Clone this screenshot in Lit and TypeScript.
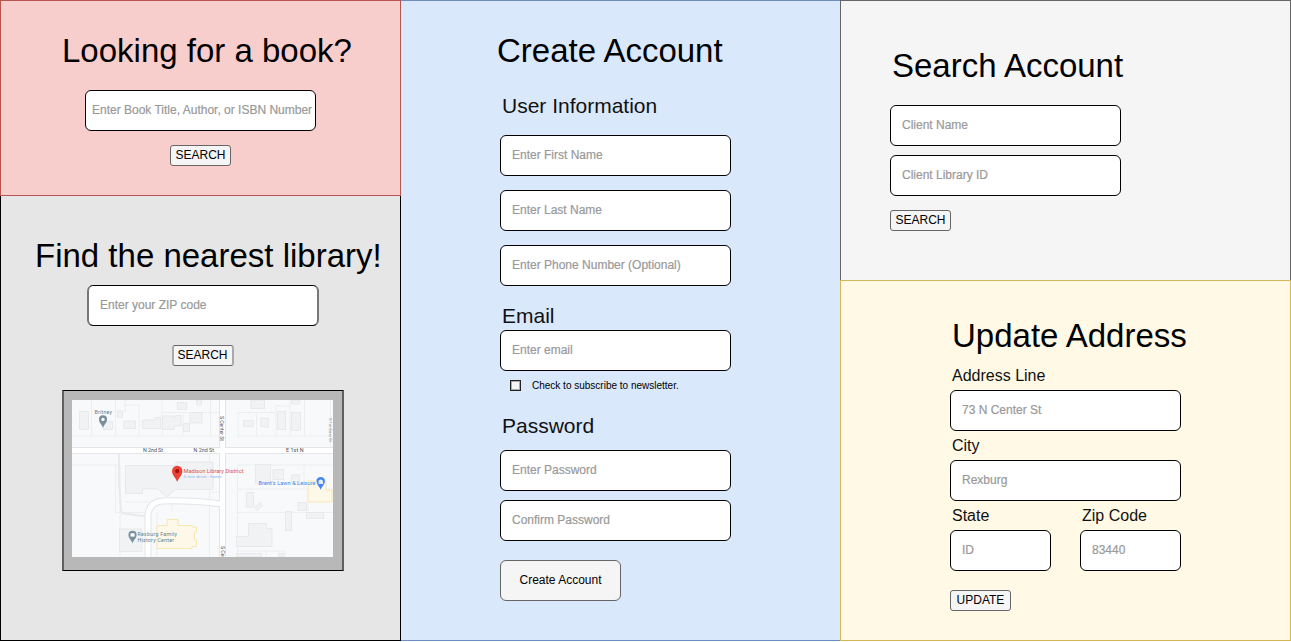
import { LitElement, html, css, svg } from "lit";
import { customElement, property } from "lit/decorators.js";

@customElement("library-map")
class LibraryMap extends LitElement {
  static styles = css`
    :host { display: block; }
    svg { display: block; width: 261px; height: 157px; font-family: Roboto, sans-serif; }
    .line { fill: none; stroke: #eceef0; stroke-width: 1; }
    .edge { fill: none; stroke: #e3e5e8; stroke-width: 7; }
    .road { fill: none; stroke: #fff; stroke-width: 5; }
    .thin { fill: none; stroke: #e8eaec; stroke-width: 2; }
    .house { fill: #f1f2f3; stroke: #e4e6e8; stroke-width: 0.8; }
    .shop { fill: #fef8e8; stroke: #fae6b5; stroke-width: 1; }
    .street { fill: #4c5054; font-size: 5.4px; }
    .side { fill: #4c5054; font-size: 4.4px; opacity: 0.65; }
    .place { fill: #5f7f8c; font-size: 5.3px; }
    .red { fill: #d8524a; font-size: 5.6px; }
    .blue { fill: #4285e8; font-size: 5.5px; }
    .note { fill: #7fb0f2; font-size: 4.2px; }
  `;

  pin(x: number, y: number, size: number, color: string, dot: string) {
    return svg`<g transform="translate(${x} ${y}) scale(${size})">
      <path d="M0 0C-.8-3-4-5-4-8.5a4 4 0 0 1 8 0C4-5 .8-3 0 0Z" fill=${color}></path>
      <circle cx="0" cy="-8.4" r="1.6" fill=${dot}></circle></g>`;
  }

  render() {
    return html`<svg viewBox="72 400 261 157">
      <rect x="72" y="400" width="261" height="157" fill="#f8f9fb"></rect>
      <path class="line" d="M72 436H219M91.500 400V436M115.500 400V436M125 413V400M125 405H139V436M162 400V412.500H219M162 412.500V436M183 412.500V436M210.500 400V436M238 412.500H276V406H290V436M238 412.500V436M256.500 412.500V436M276 412V436M304.500 400V436M238 436H330M290 406V400M330.500 400V447M72 465H120V557M115.500 465V512.500H145M125 502H172V512M157 512V557M209.500 454V557M209 492H219M237.500 465V557M237.500 465H333M237.500 489H333M237 512.500H333M308 489V512M237 551H285V557M266 551V557M304 465V489"></path>
      <path class="house" d="M79.500 411.500H88.500V429.500H79.500ZM117.500 411H122.500V417.500H117.500ZM103.500 421.500H112.500V429.500H103.500ZM124 421H135.500V428.500H123.500ZM142.500 420H155V417.500H160.500V428.500H142.500ZM162.500 416H174V418.500L175 415.500H181V426H174V429.500H162.500ZM183 423.500H189.500V431.500H183.500ZM177.500 402.500H186.500V409.500H177.500ZM190 414L193 412.500H202V423H190ZM196.500 400H201.500V405H196.500ZM251 400H264.500V408.500H251ZM243.500 420.500H253.500V426.500H243.500ZM261 418L269 418.500L268 427.500L260.500 426ZM277.500 411.500H285.500V429.500H277.500ZM291.500 412.500H300.500V430.500H291.500ZM291.500 400H299.500V404H291.500Z"></path>
      <path class="house" d="M125.500 465.500H176V462H213V489.500H176L166.500 497L158 489H142.500V493.500H125.500ZM119.500 529H142V551.500H119.500ZM255.500 464.500H270.500V484H255.500ZM273 469.500H283.500V479.500H273ZM291.500 475H299.500V484H291.500ZM246.500 492.500H253.500V507H246.500ZM254.500 507.500L260.500 502.500L262.500 505.500L257 510.500ZM285.500 511.500H291.500V530.500H285.500ZM298 502.500H306.500V510.500H298ZM306.500 512.500H323.500V518.500H306.500ZM248.500 523.500H266.500V528.500H272V546.500H236.500V536.500H248.500ZM236.500 553.500H261.500V557H236.500ZM278.500 553.500H283.500V557H278.500Z"></path>
      <path class="shop" d="M157 525.500H167V519.500H178V525.500H192V527H196.500V532H194.500V540H196.500V546.500H192V548.500H157ZM308 481H326V490H332V502H308Z"></path>
      <path class="thin" d="M119 454V482L121 510Q121.500 513 124 513.500L147 516.500"></path>
      <path class="edge" d="M72 450.500H333M222.500 400V557M148 557V515Q149 502.500 162 501Q190 500 222 504"></path>
      <path class="road" d="M72 450.500H333M222.500 400V557M148 557V515Q149 502.500 162 501Q190 500 222 504"></path>
      <text class="street" x="143" y="452.300" textLength="20">N 2nd St</text>
      <text class="street" x="193.500" y="452.300" textLength="20.500">N 2nd St</text>
      <text class="street" x="286" y="452.300" textLength="17.500">E 1st N</text>
      <text class="street" transform="translate(220.300 416) rotate(90)" textLength="25">S Center St</text>
      <text class="street" transform="translate(221 546) rotate(90)" textLength="10.500">S Ce</text>
      <text class="side" transform="translate(329.300 418) rotate(90)" textLength="24">S 1st East St</text>
      <text class="place" x="94.500" y="413.700" textLength="17.500">Britney</text>
      ${this.pin(103, 428, 1.02, "#78909c", "#fff")}
      ${this.pin(177.2, 482, 1.3, "#ea4335", "#a50e0e")}
      <text class="red" x="183.500" y="473" textLength="60">Madison Library District</text>
      <text class="note" x="183.500" y="478" textLength="38">5 min drive - home</text>
      <text class="blue" x="258.500" y="485.300" textLength="57">Brent's Lawn &amp; Leisure</text>
      ${this.pin(320.7, 490, 1.05, "#4285f4", "#fff")}
      <path d="M318.500 480.500H323V484H318.500Z" fill="#dce9ff"></path>
      ${this.pin(132.5, 543.5, 1.02, "#78909c", "#fff")}
      <path d="M130.500 533.500H132.300V536.500H130.500ZM132.800 533.500H134.600V536.500H132.800Z" fill="#fff"></path>
      <text class="place" x="137.500" y="536.300" textLength="39.500">Rexburg Family</text>
      <text class="place" x="137.500" y="542.300" textLength="36.500">History Center</text>
    </svg>`;
  }
}

@customElement("text-field")
class TextField extends LitElement {
  @property() hint = "";
  static styles = css`
    :host { display: block; width: 231px; height: 41px; flex: none; }
    input {
      display: block; box-sizing: border-box; width: 100%; height: 100%; margin: 0;
      padding: 0 0 2px var(--field-inset, 11px);
      border: 1px solid #000; border-width: 1px var(--field-side, 1px);
      border-left-color: var(--field-side-color, #000);
      border-right-color: var(--field-side-color, #000);
      border-radius: 6px; background: #fff; outline: none;
      font: 12px "Liberation Sans", Arial, sans-serif;
    }
    input::placeholder { color: #999; opacity: 1; -webkit-text-stroke: 0.2px #999; }
  `;
  render() {
    return html`<input placeholder=${this.hint} aria-label=${this.hint} />`;
  }
}

@customElement("app-root")
class AppRoot extends LitElement {
  static styles = css`
    :host {
      display: block; width: 1291px; height: 642px; background: #fff; color: #000;
      font-family: "Liberation Sans", Arial, sans-serif;
    }
    * { box-sizing: border-box; }
    main { display: grid; grid-template-columns: 401px 439px 451px; height: 641px; }
    .column, section { display: flex; flex-direction: column; }
    section { align-items: flex-start; border: 1px solid; }
    h1, h2 { margin: 0; font-weight: 400; white-space: nowrap; }
    h1 { font-size: 33px; line-height: 42px; height: 40px; }
    h2 { font-size: 21px; line-height: 32px; height: 30px; margin-left: 2px; color: #111; }
    label { display: block; font-size: 16px; line-height: 22px; height: 20px; padding-left: 2px; color: #111; }
    button {
      flex: none; width: 61px; height: 21px; padding: 0 0 1px; border: 1px solid #666; border-radius: 3px;
      background: #f5f5f5; color: #000; font: 12px "Liberation Sans", Arial, sans-serif;
    }
    .book { height: 196px; padding: 29px 0 0 61px; background: #f8cecc; border-color: #b85450; }
    .book text-field { --field-inset: 6px; margin: 20px 0 14px 23px; }
    .book button { margin-left: 108px; }
    .nearest { flex: 1; padding: 39px 0 0 34px; background: #e6e6e6; border-color: #000; border-top: 0; }
    .nearest text-field {
      width: 232px; margin: 10px 0 19px 52px;
      --field-side: 2px; --field-side-color: #777;
    }
    .nearest button { width: 62px; margin-left: 137px; padding-right: 1px; border-width: 1px 2px; border-left-color: #aaa; border-right-color: #aaa; }
    .map {
      width: 282px; height: 181px; margin: 24px 0 0 27px; padding: 9px 8px;
      background: #b8b8b8; border: 1px solid #000; border-width: 1px 2px;
      border-left-color: #606060; border-right-color: #606060;
    }
    .create { padding: 29px 0 0 99px; background: #dae8fc; border-color: #6c8ebf; border-left: 0; border-right: 0; }
    .create h1 { margin-left: -3px; }
    .names { display: flex; flex-direction: column; gap: 14px; margin: 14px 0; }
    .user { margin-top: 21px; line-height: 30px; }
    .check { display: flex; align-items: center; height: 28px; padding-left: 10px; gap: 11px; font-size: 10px; }
    .box { width: 11px; height: 11px; border: 1px solid #222; background: #f5f5f5; outline: 1px solid rgba(34, 34, 34, 0.35); outline-offset: -2px; }
    .password { margin-top: 12px; line-height: 30px; }
    .secret { margin: 9px 0; }
    .create button { width: 121px; height: 41px; margin-top: 19px; border-radius: 6px; }
    .find { height: 280px; padding: 44px 0 0 49px; background: #f5f5f5; border-color: #666; border-bottom: 0; }
    .find h1 { margin: 0 0 20px 2px; }
    .find text-field + text-field { margin: 9px 0 14px; }
    .update { flex: 1; padding: 34px 0 0 109px; background: #fff9e6; border-color: #d6b656; }
    .update h1 { margin: 0 0 10px 2px; }
    .update text-field { margin: 5px 0 4px; }
    .pair { display: flex; gap: 29px; margin-bottom: 15px; }
    .pair text-field { width: 101px; }
  `;

  render() {
    return html`<main>
      <div class="column">
        <section class="book">
          <h1>Looking for a book?</h1>
          <text-field hint="Enter Book Title, Author, or ISBN Number"></text-field>
          <button>SEARCH</button>
        </section>
        <section class="nearest">
          <h1>Find the nearest library!</h1>
          <text-field hint="Enter your ZIP code"></text-field>
          <button>SEARCH</button>
          <div class="map"><library-map></library-map></div>
        </section>
      </div>
      <section class="create">
        <h1>Create Account</h1>
        <h2 class="user">User Information</h2>
        <div class="names">
          <text-field hint="Enter First Name"></text-field>
          <text-field hint="Enter Last Name"></text-field>
          <text-field hint="Enter Phone Number (Optional)"></text-field>
        </div>
        <h2>Email</h2>
        <text-field hint="Enter email"></text-field>
        <div class="check"><span class="box"></span><span>Check to subscribe to newsletter.</span></div>
        <h2 class="password">Password</h2>
        <text-field class="secret" hint="Enter Password"></text-field>
        <text-field hint="Confirm Password"></text-field>
        <button>Create Account</button>
      </section>
      <div class="column">
        <section class="find">
          <h1>Search Account</h1>
          <text-field hint="Client Name"></text-field>
          <text-field hint="Client Library ID"></text-field>
          <button>SEARCH</button>
        </section>
        <section class="update">
          <h1>Update Address</h1>
          <label>Address Line</label>
          <text-field hint="73 N Center St"></text-field>
          <label>City</label>
          <text-field hint="Rexburg"></text-field>
          <div class="pair">
            <div><label>State</label><text-field hint="ID"></text-field></div>
            <div><label>Zip Code</label><text-field hint="83440"></text-field></div>
          </div>
          <button>UPDATE</button>
        </section>
      </div>
    </main>`;
  }
}
